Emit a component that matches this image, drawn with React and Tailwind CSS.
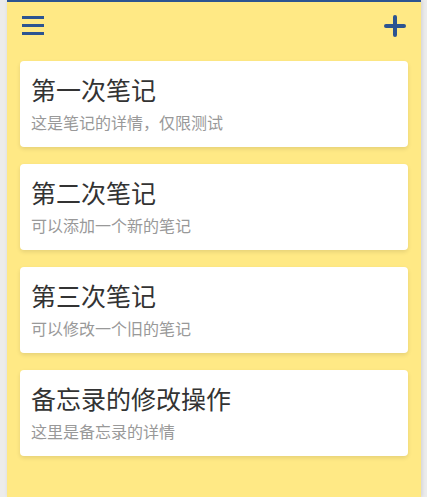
import React from "react";

const notes = [
  { title: "第一次笔记", desc: "这是笔记的详情，仅限测试" },
  { title: "第二次笔记", desc: "可以添加一个新的笔记" },
  { title: "第三次笔记", desc: "可以修改一个旧的笔记" },
  { title: "备忘录的修改操作", desc: "这里是备忘录的详情" },
];

export default function App() {
  return (
    <div
      className="w-[427px] h-[497px] bg-[#ececec] overflow-hidden"
      style={{ fontFamily: '"Noto Sans CJK SC", "Noto Sans", sans-serif' }}
    >
      <div className="ml-[7px] w-[414px] h-[497px] bg-[#ffe985] border-t-2 border-[#2c5491] shadow-[1px_0_4px_rgba(0,0,0,0.12)] flex flex-col">
        <div className="h-[48px] px-[15px] flex items-center justify-between">
          <svg width="22" height="22" viewBox="0 0 22 22">
            <rect x="0" y="1" width="22" height="3" fill="#2c5491" />
            <rect x="0" y="9" width="22" height="3" fill="#2c5491" />
            <rect x="0" y="17" width="22" height="3" fill="#2c5491" />
          </svg>
          <svg width="22" height="22" viewBox="0 0 22 22">
            <line x1="11" y1="2" x2="11" y2="20" stroke="#2c5491" strokeWidth="4" strokeLinecap="round" />
            <line x1="2" y1="11" x2="20" y2="11" stroke="#2c5491" strokeWidth="4" strokeLinecap="round" />
          </svg>
        </div>
        <div className="pt-[11px] px-[13px] flex flex-col gap-[17px]">
          {notes.map((n) => (
            <div
              key={n.title}
              className="h-[86px] bg-white rounded-[4px] shadow-[0_2px_4px_rgba(0,0,0,0.1)] pl-[11px] pt-[11px]"
            >
              <div className="text-[25px] leading-[35px] text-[#333333]">{n.title}</div>
              <div className="mt-[4px] text-[16px] leading-[22px] text-[#999999]">{n.desc}</div>
            </div>
          ))}
        </div>
      </div>
    </div>
  );
}
